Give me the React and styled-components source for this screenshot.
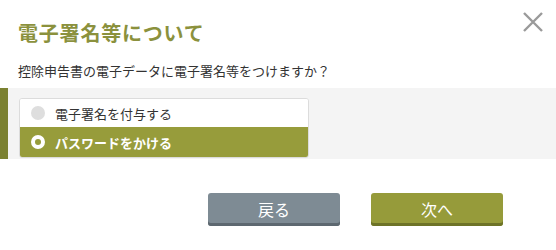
import React, { useState } from "react";
import styled, { createGlobalStyle } from "styled-components";

const GlobalStyle = createGlobalStyle`
  body {
    margin: 0;
    background: #fff;
    font-family: "Noto Sans CJK JP", "Noto Sans", sans-serif;
    color: #333;
  }
`;

const Dialog = styled.div`
  width: 556px;
  height: 250px;
  position: relative;
  background: #fff;
`;

const Header = styled.div`
  display: flex;
  align-items: center;
  justify-content: space-between;
  padding: 18px 12px 0 18px;
  height: 30px;
`;

const Title = styled.h1`
  margin: 0;
  font-size: 20px;
  font-weight: 700;
  color: #8b913d;
  letter-spacing: 0.8px;
  line-height: 30px;
`;

const CloseButton = styled.button`
  border: 0;
  background: none;
  padding: 0;
  width: 22px;
  height: 22px;
  margin-top: -22px;
  cursor: pointer;
`;

const Lead = styled.p`
  margin: 14px 0 0 18px;
  font-size: 13px;
  line-height: 18px;
  color: #333;
`;

const Choice = styled.div`
  margin-top: 8px;
  height: 71px;
  background: #f4f4f4;
  border-left: 8px solid #7b8131;
  padding: 10px 0 0 11px;
  box-sizing: border-box;
`;

const OptionList = styled.div`
  width: 290px;
  border: 1px solid #dcdcdc;
  border-radius: 3px;
  overflow: hidden;
  background: #fff;
  box-sizing: border-box;
`;

const Option = styled.label`
  display: flex;
  align-items: center;
  gap: 10px;
  height: ${(p) => (p.$selected ? 30 : 28)}px;
  padding-left: 11px;
  font-size: 13px;
  font-weight: ${(p) => (p.$selected ? 700 : 400)};
  color: ${(p) => (p.$selected ? "#fff" : "#333")};
  background: ${(p) => (p.$selected ? "#979c3b" : "#fff")};
  cursor: pointer;
`;

const Radio = styled.span`
  width: 14px;
  height: 14px;
  border-radius: 50%;
  box-sizing: border-box;
  background: ${(p) => (p.$checked ? "#979c3b" : "#dedede")};
  border: ${(p) => (p.$checked ? "4px solid #fff" : "0")};
  flex: none;
`;

const Actions = styled.div`
  display: flex;
  justify-content: flex-end;
  gap: 31px;
  padding: 34px 53px 0 0;
`;

const Button = styled.button`
  width: 132px;
  height: 33px;
  border: 0;
  border-radius: 3px;
  font-family: inherit;
  font-size: 16px;
  color: #fff;
  background: ${(p) => (p.$primary ? "#969b3a" : "#7e8b94")};
  box-shadow: inset 0 -3px 0 ${(p) => (p.$primary ? "#6d7327" : "#5d6870")};
  padding-bottom: 2px;
  cursor: pointer;
`;

const options = ["電子署名を付与する", "パスワードをかける"];

export default function App() {
  const [selected, setSelected] = useState(1);

  return (
    <Dialog>
      <GlobalStyle />
      <Header>
        <Title>電子署名等について</Title>
        <CloseButton aria-label="閉じる">
          <svg width="22" height="22" viewBox="0 0 22 22">
            <path d="M2 2 L20 20 M20 2 L2 20" stroke="#9a9a9a" strokeWidth="2.4" fill="none" />
          </svg>
        </CloseButton>
      </Header>
      <Lead>控除申告書の電子データに電子署名等をつけますか？</Lead>
      <Choice>
        <OptionList>
          {options.map((text, i) => (
            <Option key={text} $selected={selected === i} onClick={() => setSelected(i)}>
              <Radio $checked={selected === i} />
              {text}
            </Option>
          ))}
        </OptionList>
      </Choice>
      <Actions>
        <Button>戻る</Button>
        <Button $primary>次へ</Button>
      </Actions>
    </Dialog>
  );
}
